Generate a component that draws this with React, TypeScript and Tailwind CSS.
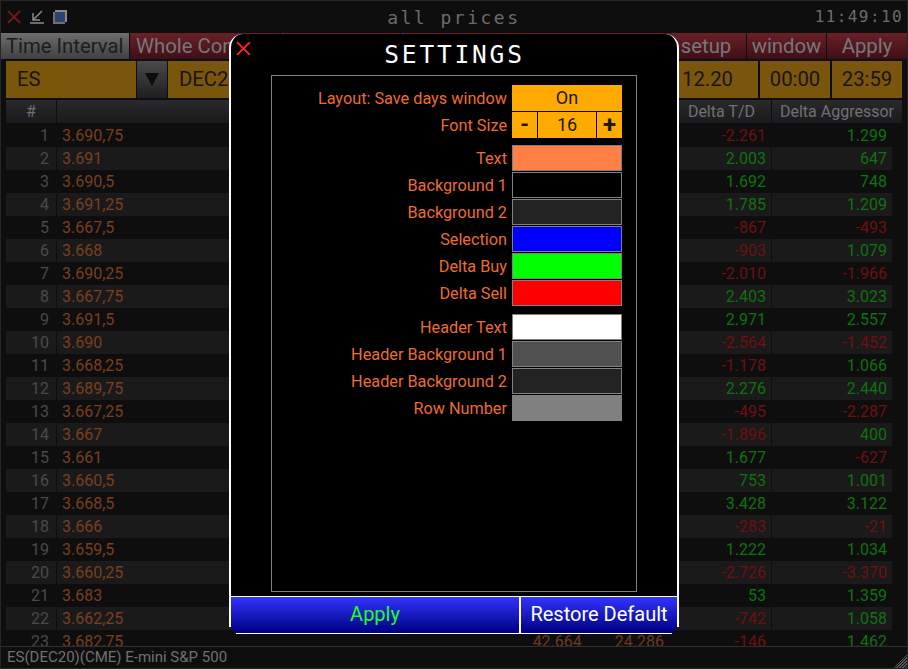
import React from "react";

const rows: [string, string, string][] = [
  ["3.690,75", "-2.261", "1.299"],
  ["3.691", "2.003", "647"],
  ["3.690,5", "1.692", "748"],
  ["3.691,25", "1.785", "1.209"],
  ["3.667,5", "-867", "-493"],
  ["3.668", "-903", "1.079"],
  ["3.690,25", "-2.010", "-1.966"],
  ["3.667,75", "2.403", "3.023"],
  ["3.691,5", "2.971", "2.557"],
  ["3.690", "-2.564", "-1.452"],
  ["3.668,25", "-1.178", "1.066"],
  ["3.689,75", "2.276", "2.440"],
  ["3.667,25", "-495", "-2.287"],
  ["3.667", "-1.896", "400"],
  ["3.661", "1.677", "-627"],
  ["3.660,5", "753", "1.001"],
  ["3.668,5", "3.428", "3.122"],
  ["3.666", "-283", "-21"],
  ["3.659,5", "1.222", "1.034"],
  ["3.660,25", "-2.726", "-3.370"],
  ["3.683", "53", "1.359"],
  ["3.662,25", "-742", "1.058"],
  ["3.682,75", "-146", "1.462"],
];

function deltaColor(value: string) {
  return value.startsWith("-") ? "text-[#6e1010]" : "text-[#0f720f]";
}

function CloseIcon({ size, color }: { size: number; color: string }) {
  return (
    <svg width={size} height={size} viewBox="0 0 14 14" className={color}>
      <path d="M1 1 L13 13 M13 1 L1 13" fill="none" stroke="currentColor" strokeWidth="1.800" />
    </svg>
  );
}

function Tab({ label, className }: { label?: string; className: string }) {
  return (
    <div className={`flex h-[26px] items-center overflow-hidden whitespace-nowrap bg-gradient-to-b from-[#6a2029] to-[#3f0f15] text-[20.300px] text-[#77777a] ${className}`}>
      {label}
    </div>
  );
}

function GoldCell({ label, className }: { label: string; className: string }) {
  return (
    <div className={`flex h-[37px] items-center bg-[#7a560c] text-[20.300px] text-[#191410] ${className}`}>
      {label}
    </div>
  );
}

function SettingRow({ label, className = "", children }: { label: string; className?: string; children: React.ReactNode }) {
  return (
    <div className={`flex h-[27px] items-center ${className}`}>
      <span className="w-[240px] pr-[5px] pt-[4px] text-right text-[16.250px] text-[#ec6c30]">{label}</span>
      {children}
    </div>
  );
}

function SwatchRow({ label, color, className }: { label: string; color: string; className?: string }) {
  return (
    <SettingRow label={label} className={className}>
      <div className={`h-[26px] w-[110px] border border-[#808080] ${color}`} />
    </SettingRow>
  );
}

export default function App() {
  return (
    <div className="relative flex h-[669px] w-[908px] flex-col overflow-hidden border border-[#262626] bg-[#0e0e0e] font-['Roboto',sans-serif]">
      {/* Title bar */}
      <div className="flex h-[32px] shrink-0 items-center pl-[6px] pr-[4px]">
        <CloseIcon size={14} color="text-[#6e1a1a]" />
        <svg width="14" height="14" viewBox="0 0 14 14" className="ml-[9px] text-[#8a8a8a]">
          <path d="M12 1 L3 10 M3 3 V10 H10 M0 13 H14" fill="none" stroke="currentColor" strokeWidth="1.500" />
        </svg>
        <svg width="14" height="14" viewBox="0 0 14 14" className="ml-[9px]">
          <rect x="0" y="2" width="12" height="12" fill="#707070" />
          <rect x="2" y="0" width="12" height="12" fill="#8a8a8a" />
          <rect x="2" y="2" width="10" height="10" fill="#2c4270" />
        </svg>
        <div className="flex-1 pl-[26px] text-center font-['DejaVu_Sans_Mono',monospace] text-[18px] tracking-[2.500px] text-[#6c6c6c]">
          all prices
        </div>
        <div className="font-['DejaVu_Sans_Mono',monospace] text-[16px] tracking-[1.400px] text-[#6c6c6c]">11:49:10</div>
      </div>

      {/* Tabs */}
      <div className="flex shrink-0 gap-px">
        <div className="flex h-[26px] w-[128px] items-center whitespace-nowrap bg-gradient-to-b from-[#6e6e6e] to-[#404040] pl-[5px] text-[20.300px] text-[#1c1c1c]">
          Time Interval
        </div>
        <Tab label="Whole Contract" className="w-[150px] pl-[6px]" />
        <Tab className="w-[119px]" />
        <Tab className="w-[264px]" />
        <Tab label="setup" className="w-[80px] justify-center" />
        <Tab label="window" className="w-[79px] justify-center" />
        <Tab label="Apply" className="w-[80px] justify-center" />
      </div>

      {/* Contract selectors */}
      <div className="mt-[2px] flex shrink-0 gap-px pl-[5px]">
        <GoldCell label="ES" className="w-[130px] pl-[11px]" />
        <div className="flex h-[37px] w-[30px] items-center justify-center bg-gradient-to-b from-[#4a4a4a] to-[#1f1f1f]">
          <div className="h-0 w-0 border-x-[7px] border-t-[13px] border-x-transparent border-t-[#0c0c0c]" />
        </div>
        <GoldCell label="DEC20" className="w-[590px] pl-[11px]" />
        <GoldCell label="00:00" className="ml-px w-[70px] justify-center" />
        <GoldCell label="23:59" className="ml-px w-[70px] justify-center" />
      </div>

      {/* Table */}
      <div className="mt-[2px] min-h-0 flex-1 overflow-hidden pl-[5px]">
        <div className="mb-px flex h-[23px] gap-px text-[16px] text-[#707074]">
          <div className="flex w-[50px] items-center justify-center bg-gradient-to-b from-[#2a2a2c] to-[#1a1a1c]">#</div>
          <div className="flex w-[714px] items-center justify-end bg-gradient-to-b from-[#2a2a2c] to-[#1a1a1c] pr-[16px]">Delta T/D</div>
          <div className="flex w-[130px] items-center justify-center bg-gradient-to-b from-[#2a2a2c] to-[#1a1a1c]">Delta Aggressor</div>
        </div>
        {rows.map((row, i) => {
          const cellBg = i % 2 === 1 ? "bg-[#1a1a1a]" : "";
          return (
            <div key={i} className="flex h-[23px] gap-px text-[16px]">
              <div className={`flex w-[50px] items-center justify-end pr-[7px] text-[#4a4a4a] ${cellBg}`}>{i + 1}</div>
              <div className={`flex w-[714px] items-center ${cellBg}`}>
                <div className="w-[200px] pl-[5px] text-[#7a3f20]">{row[0]}</div>
                <div className="flex w-[407px] justify-end gap-[33px] text-[#6b3a20]">
                  {i === 22 && (
                    <>
                      <span>42.664</span>
                      <span>24.286</span>
                    </>
                  )}
                </div>
                <div className={`flex-1 pr-[5px] text-right ${deltaColor(row[1])}`}>{row[1]}</div>
              </div>
              <div className={`flex w-[120px] items-center justify-end pr-[5px] ${deltaColor(row[2])} ${cellBg}`}>{row[2]}</div>
            </div>
          );
        })}
      </div>

      {/* Status bar */}
      <div className="relative flex h-[22px] shrink-0 items-center border-t border-[#303030] pl-[6px] text-[15px] text-[#707070]">
        ES(DEC20)(CME) E-mini S&amp;P 500
        <div className="absolute bottom-0 right-0 h-[14px] w-[14px] bg-[repeating-linear-gradient(135deg,#555_0,#555_1px,transparent_1px,transparent_2px)] [clip-path:polygon(100%_0,100%_100%,0_100%)]" />
      </div>

      {/* 12.20 sits in the gold date cell, just left of the time boxes */}
      <div className="absolute left-[681px] top-[60px] flex h-[37px] items-center text-[20.300px] text-[#191410]">12.20</div>

      {/* Settings dialog */}
      <div className="absolute left-[228px] top-[33px] flex h-[600px] w-[450px] flex-col">
        <div className="relative flex h-[562px] shrink-0 flex-col rounded-t-[14px] border-x-2 border-white bg-black">
          <div className="absolute left-[5px] top-[7px]">
            <CloseIcon size={15} color="text-[#ff2020]" />
          </div>
          <div className="flex h-[41px] shrink-0 items-center justify-center pl-[1px] pt-[2px] font-['DejaVu_Sans_Mono',monospace] text-[24.500px] tracking-[2.800px] text-white">
            SETTINGS
          </div>
          <div className="mx-[40px] mb-[4px] flex-1 border border-[#808080] pt-[8px]">
            <SettingRow label="Layout: Save days window">
              <div className="flex h-[26px] w-[110px] items-center justify-center bg-[#ffaa00] text-[18px] text-[#1a1a00]">On</div>
            </SettingRow>
            <SettingRow label="Font Size">
              <div className="flex h-[26px] w-[110px] gap-px bg-black text-[#1a1a00]">
                <div className="flex w-[25px] items-center justify-center bg-[#ffaa00] text-[22px] font-bold">-</div>
                <div className="flex flex-1 items-center justify-center bg-[#ffaa00] text-[18px]">16</div>
                <div className="flex w-[25px] items-center justify-center bg-[#ffaa00] text-[24px] font-bold">+</div>
              </div>
            </SettingRow>
            <SwatchRow label="Text" color="bg-[#ff7f45]" className="mt-[6px]" />
            <SwatchRow label="Background 1" color="bg-black" />
            <SwatchRow label="Background 2" color="bg-[#222222]" />
            <SwatchRow label="Selection" color="bg-[#0000ff]" />
            <SwatchRow label="Delta Buy" color="bg-[#00ff00]" />
            <SwatchRow label="Delta Sell" color="bg-[#ff0000]" />
            <SwatchRow label="Header Text" color="bg-white" className="mt-[7px]" />
            <SwatchRow label="Header Background 1" color="bg-[#505050]" />
            <SwatchRow label="Header Background 2" color="bg-[#222222]" />
            <SwatchRow label="Row Number" color="bg-[#808080]" />
          </div>
        </div>

        {/* Buttons: the rounded blue corners stand free of the white edge */}
        <div className="h-px shrink-0 bg-white" />
        <div className="flex h-[36px] shrink-0">
          <div className="h-[30px] w-[2px] bg-white" />
          <div className="flex w-[288px] items-center justify-center rounded-bl-[8px] bg-gradient-to-b from-[#3333ff] to-[#000080] pb-[2px] text-[20px] text-[#22ff22]">Apply</div>
          <div className="w-[2px] bg-white" />
          <div className="flex flex-1 items-center justify-center rounded-br-[8px] bg-gradient-to-b from-[#3333ff] to-[#000080] pb-[2px] text-[20px] text-white">Restore Default</div>
          <div className="h-[30px] w-[2px] bg-white" />
        </div>
        <div className="mx-[7px] h-px shrink-0 bg-white" />
      </div>
    </div>
  );
}
